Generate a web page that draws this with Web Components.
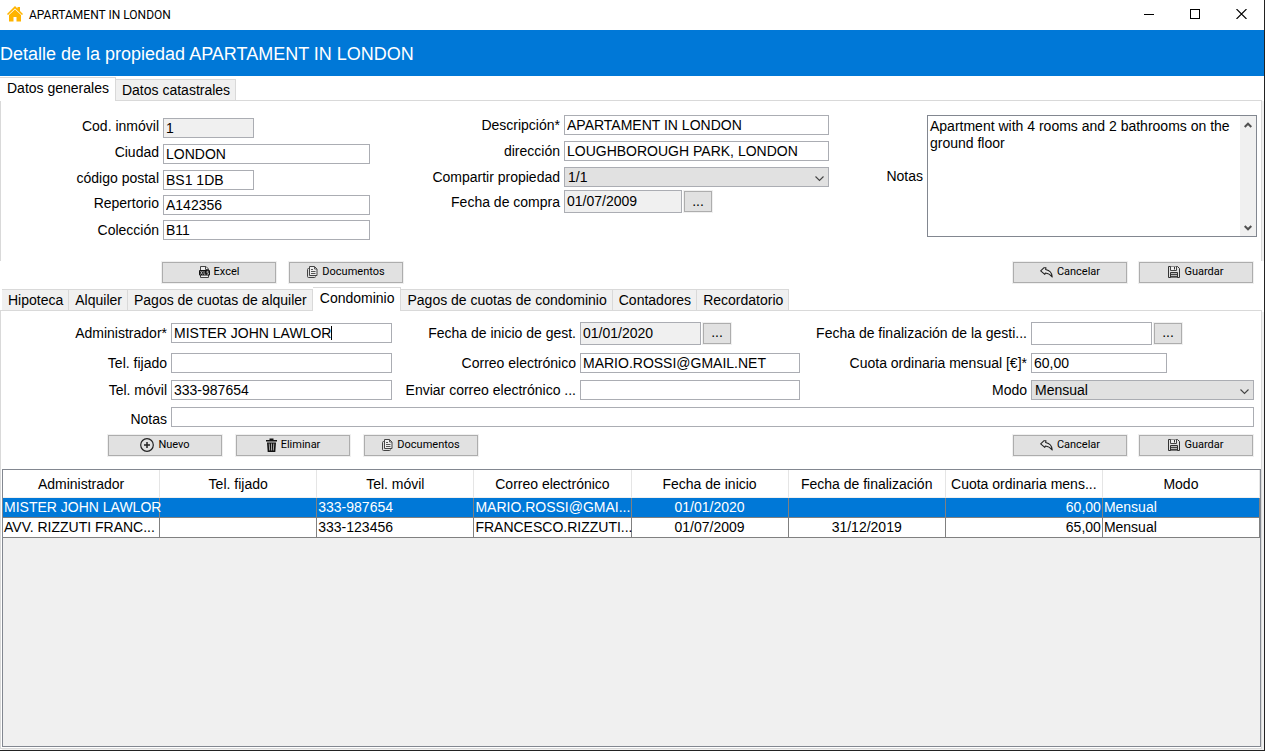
<!DOCTYPE html>
<html lang="es">
<head>
<meta charset="utf-8">
<title>APARTAMENT IN LONDON</title>
<style>
  html, body { margin: 0; height: 100%; }
  body { font: 14px/16px "Liberation Sans", Arial, sans-serif; color: #000; background: #fff; }
</style>
</head>
<body>
<property-detail></property-detail>

<script>
const ICONS = {
  home: '<svg width="16" height="16" viewBox="0 0 16 16"><path fill="#ffb400" d="M8 0 10.500 2.500V1H13V5L16 8 15 9 8 2.500 1 9 0 8Z"/><path fill="#ffb400" d="M2 9 8 3.600 14 9V15.500H9.500V11H6.500V15.500H2Z"/></svg>',
  excel: '<svg width="11" height="12" viewBox="0 0 11 12"><path fill="#eee" stroke="#444" d="M1.500 4V.5H7L9.500 3V4M1.500 9V11.500H9.500V9"/><path stroke="#444" fill="none" d="M6.500.5V3.500H9.500"/><rect y="4" width="11" height="5.500" rx="1" fill="#111"/><path stroke="#ccc" stroke-width=".8" fill="none" d="M1.500 5 3.500 8.500M3.500 5 1.500 8.500M5 5V8.200H6.500M9.500 5.300H8V6.800H9.500V8.200H7.800"/></svg>',
  docs: '<svg width="11" height="12" viewBox="0 0 11 12"><path fill="#ddd" stroke="#444" d="M2.500 2.500H1.500Q.5 2.500.5 3.500V10.500Q.5 11.500 1.500 11.500H7.500Q8.500 11.500 8.500 10.500"/><path fill="#eee" stroke="#444" d="M2.500.5H7.500L10 3V9.500H2.500Z"/><path stroke="#555" fill="none" d="M7.500.5V3H10M4 3.500H6M4 5.500H8.500M4 7.500H8.500"/></svg>',
  undo: '<svg width="13" height="11" viewBox="0 0 13 11"><path fill="#e6e6e6" stroke="#222" stroke-width="1.100" stroke-linejoin="round" d="M.7 3.800 3.800.8 6 .7 5.600 2.500C9 3.200 12 5.200 12.200 10 10 7.200 8 6.200 5.400 6L4.800 7.400Z"/></svg>',
  save: '<svg width="12" height="12" viewBox="0 0 12 12"><path fill="#e0e0e0" stroke="#333" d="M.5.5H9.500L11.500 2.500V11.500H.5Z"/><path fill="#eee" stroke="#444" d="M2.500.5V4.500H8.500V.5"/><path stroke="#333" d="M6.500 1V3.500"/><path fill="#bbb" stroke="#333" d="M2.500 11.500V6.500H9.500V11.500"/><path stroke="#444" d="M3 8.500H9M3 10.500H9"/></svg>',
  add: '<svg width="14" height="14" viewBox="0 0 14 14"><circle cx="7" cy="7" r="6.300" fill="none" stroke="#222" stroke-width="1.200"/><path stroke="#222" stroke-width="1.500" d="M7 4V10M4 7H10"/></svg>',
  trash: '<svg width="11" height="14" viewBox="0 0 11 14"><path fill="#111" d="M0 2H3.500V.5H7.500V2H11V3.500H0ZM1 4.500H10L9.300 14H1.700Z"/><path stroke="#ccc" stroke-width=".8" d="M3.200 5.500 3.700 12.500M5.500 5.500V12.500M7.800 5.500 7.300 12.500"/></svg>',
  min: '<svg width="10" height="10" viewBox="0 0 10 10"><path stroke="#000" d="M0 5.500H10"/></svg>',
  max: '<svg width="10" height="10" viewBox="0 0 10 10"><rect x=".5" y=".5" width="9" height="9" fill="none" stroke="#000"/></svg>',
  close: '<svg width="11" height="10" viewBox="0 0 11 10"><path stroke="#000" stroke-width="1.100" d="M.5 0 10.500 10M10.500 0 .5 10"/></svg>',
  up: '<svg width="8" height="6" viewBox="0 0 8 6"><path fill="none" stroke="#505050" stroke-width="2" d="M.7 5 4 1.700 7.300 5"/></svg>',
  down: '<svg width="8" height="6" viewBox="0 0 8 6"><path fill="none" stroke="#505050" stroke-width="2" d="M.7 1 4 4.300 7.300 1"/></svg>',
  chevron: '<svg width="9" height="6" viewBox="0 0 9 6"><path fill="none" stroke="#444" stroke-width="1.100" d="M.5.5 4.500 4.500 8.500.5"/></svg>'
};

class BaseElement extends HTMLElement {
  connectedCallback() {
    if (this.shadowRoot) return;
    const root = this.attachShadow({ mode: 'open' });
    root.innerHTML = `<style>*{box-sizing:border-box}${this.styles()}</style>${this.markup()}`;
  }
  attr(name, fallback = '') { return this.getAttribute(name) ?? fallback; }
}

/* Title bar with application icon and window buttons */
class TitleBar extends BaseElement {
  styles() { return `
    :host { display: flex; align-items: center; height: 30px; flex: none; background: #fff; font: 12px/16px Roboto, "Noto Sans", sans-serif; }
    .icon { display: flex; margin: 0 6px 3px 7px; }
    span.name { flex: 1; }
    button { width: 46px; height: 30px; padding: 0 0 2px; border: 0; background: none; display: flex; align-items: center; justify-content: center; }
  `; }
  markup() { return `
    <span class="icon">${ICONS.home}</span><span class="name"><slot></slot></span>
    <button aria-label="Minimizar">${ICONS.min}</button>
    <button aria-label="Maximizar">${ICONS.max}</button>
    <button aria-label="Cerrar">${ICONS.close}</button>`; }
}
customElements.define('title-bar', TitleBar);

/* Push button with an icon */
class ToolButton extends BaseElement {
  styles() { return `
    :host { display: block; }
    button { display: flex; align-items: center; justify-content: center; gap: 4px; width: 114px; height: 21px; padding: 0 0 1px;
      border: 1px solid #adadad; background: #e1e1e1; box-shadow: 0 0 0 1px #f0f0f0; color: #000;
      font: 11px/14px Roboto, "Noto Sans", sans-serif; }
  `; }
  markup() { return `<button>${ICONS[this.attr('icon')]}<span><slot></slot></span></button>`; }
}
customElements.define('tool-button', ToolButton);

/* Tab headings above a page */
class TabStrip extends BaseElement {
  styles() { return `
    :host { display: flex; align-items: flex-end; height: 24px; flex: none; border-bottom: 1px solid #d9d9d9; }
    button { font: inherit; color: #000; height: 21px; margin: 0; padding: 0 5px 0 6px; white-space: nowrap;
      border: 1px solid #d9d9d9; border-bottom: 0; border-left-width: 0; background: #f0f0f0; }
    button:first-child { border-left-width: 1px; }
    button[aria-selected=true] { position: relative; height: 24px; margin-bottom: -1px; padding: 0 6px 4px 7px; background: #fff; }
  `; }
  markup() {
    return this.attr('tabs').split('|').map(t =>
      `<button role="tab" aria-selected="${t === this.attr('active')}">${t}</button>`).join('');
  }
}
customElements.define('tab-strip', TabStrip);

/* Label and control on the label/control columns of the parent grid.
   kind: text (default), date, select, area */
class FormField extends BaseElement {
  styles() { return `
    :host { display: grid; grid-template-columns: subgrid; grid-column: span 2; align-items: center; }
    :host([wide]) { grid-column: 1 / -1; align-items: end; }
    :host([raised]) { align-items: start; }
    :host([first]) { min-height: 24px; }
    label { text-align: right; padding-right: 4px; white-space: nowrap; }
    .control { display: flex; align-items: center; gap: 2px; min-width: 0; position: relative; }
    :host([wide]) .control { grid-column: 2 / -1; }
    input, select { font: inherit; color: #000; width: 100%; height: 20px; margin: 0; padding: 0 2px; border: 1px solid #abadb3; border-radius: 0; background: #fff; outline: 0; }
    input[readonly] { background: #f0f0f0; }
    select { appearance: none; background: #e1e1e1; padding: 0 3px; }
    .control > svg { position: absolute; right: 5px; top: 9px; pointer-events: none; }
    :host([size=short]) input { width: 91px; }
    :host([size=money]) input { width: 136px; }
    :host([kind=date]) input { width: 121px; height: 23px; padding-bottom: 1px; }
    :host([kind=date][size=narrow]) input { width: 118px; }
    button { width: 28px; height: 21px; padding: 0 0 2px; border: 1px solid #adadad; background: #e1e1e1; box-shadow: 0 0 0 1px #f0f0f0; font: inherit; color: #000; }
    :host([caret]) input { background: linear-gradient(#000, #000) no-repeat 159px 2px / 1px 14px #fff; }
    .area { align-items: stretch; gap: 0; height: 122px; border: 1px solid #828790; }
    textarea { flex: 1; min-width: 0; font: inherit; line-height: 17px; color: #000; border: 0; margin: 0; padding: 2px; resize: none; outline: 0; overflow: hidden; background: #fff; }
    .bar { width: 16px; display: flex; flex-direction: column; justify-content: space-between; align-items: center; padding: 6px 0 5px; background: #f0f0f0; }
  `; }
  markup() {
    const kind = this.attr('kind', 'text'), value = this.attr('value');
    const ro = this.hasAttribute('readonly') ? ' readonly' : '';
    let control;
    if (kind === 'select') control = `<div class="control"><select id="c"><option>${value}</option></select>${ICONS.chevron}</div>`;
    else if (kind === 'area') control = `<div class="control area"><textarea id="c">${value}</textarea><div class="bar">${ICONS.up}${ICONS.down}</div></div>`;
    else control = `<div class="control"><input id="c" type="text" value="${value}"${ro}>${kind === 'date' ? '<button aria-label="Elegir fecha">...</button>' : ''}</div>`;
    return `<label for="c">${this.attr('label')}</label>${control}`;
  }
}
customElements.define('form-field', FormField);

/* Managers table */
class DataTable extends BaseElement {
  styles() { return `
    :host { display: block; border: 1px solid #828790; background: #f0f0f0; }
    table { width: 100%; table-layout: fixed; border-collapse: separate; border-spacing: 0; background: #fff; }
    th, td { white-space: nowrap; text-align: left; font-weight: normal; padding: 0 1px; }
    th { height: 28px; text-align: center; border-right: 1px solid #e5e5e5; border-bottom: 1px solid #f0f0f0; }
    td { height: 20px; padding-bottom: 2px; border-right: 1px solid #808080; border-bottom: 1px solid #808080; }
    tr.selected td { background: #0078d7; color: #fff; }
    td.center { text-align: center; }
    td.right { text-align: right; }
  `; }
  markup() {
    const heads = ['Administrador', 'Tel. fijado', 'Tel. móvil', 'Correo electrónico', 'Fecha de inicio', 'Fecha de finalización', 'Cuota ordinaria mens...', 'Modo'];
    const rows = [
      ['MISTER JOHN LAWLOR', '', '333-987654', 'MARIO.ROSSI@GMAI...', '01/01/2020', '', '60,00', 'Mensual'],
      ['AVV. RIZZUTI FRANC...', '', '333-123456', 'FRANCESCO.RIZZUTI...', '01/07/2009', '31/12/2019', '65,00', 'Mensual']
    ];
    const align = ['', '', '', '', 'center', 'center', 'right', ''];
    return `<table><thead><tr>${heads.map(h => `<th>${h}</th>`).join('')}</tr></thead><tbody>${
      rows.map((r, i) => `<tr class="${i ? '' : 'selected'}">${r.map((c, j) => `<td class="${align[j]}">${c}</td>`).join('')}</tr>`).join('')
    }</tbody></table>`;
  }
}
customElements.define('data-table', DataTable);

class PropertyDetail extends BaseElement {
  styles() { return `
    :host { display: flex; flex-direction: column; min-height: 100vh; border-right: 1px solid #222; border-bottom: 1px solid #222; background: #fff; box-sizing: border-box; }
    h1 { margin: 0; height: 46px; flex: none; background: #0078d7; color: #fff; font-size: 18px; line-height: 48px; font-weight: normal; }
    .strip1 { margin-top: 1px; margin-right: 2px; }
    .page { border-right: 1px solid #d9d9d9; margin-right: 2px; }
    .general { display: grid; grid-template-columns: 163px 207fr 194px 265fr 98px 330fr; padding: 14px 4px 21px 0; box-shadow: inset 1px 0 #d9d9d9, 2px 0 #f0f0f0; }
    section { display: grid; grid-template-columns: subgrid; grid-column: span 2; align-content: start; align-items: start; }
    .left { padding-top: 3px; grid-template-rows: 26px 26px 25px 25px 20px; }
    .middle { grid-template-rows: 26px 26px 23px 23px; }
    .actions { display: flex; justify-content: space-between; flex: none; padding: 1px 11px 4px 162px; }
    .actions div { display: flex; gap: 12px; }
    .actions .start { gap: 13px; }
    .strip2 { margin-right: 2px; padding-left: 2px; }
    .condo { flex: 1; display: flex; flex-direction: column; margin-bottom: 1px; padding: 10px 0 1px; border-bottom: 1px solid #d9d9d9; box-shadow: inset 1px 0 #d9d9d9, 2px 1px #f0f0f0; }
    .fields { display: grid; grid-template-columns: 171px 221fr 188px 220fr 231px 223fr; grid-template-rows: 32px 27px 27px 20px; align-items: start; padding-right: 7px; }
    .condo .actions { padding: 8px 8px 13px 108px; }
    .condo .start { gap: 14px; }
    data-table { flex: 1; margin-left: 2px; }
  `; }
  markup() { return `
    <title-bar>APARTAMENT IN LONDON</title-bar>
    <h1>Detalle de la propiedad APARTAMENT IN LONDON</h1>
    <tab-strip class="strip1" role="tablist" tabs="Datos generales|Datos catastrales" active="Datos generales"></tab-strip>
    <div class="page general">
      <section class="left">
        <form-field raised size="short" readonly label="Cod. inmóvil" value="1"></form-field>
        <form-field raised label="Ciudad" value="LONDON"></form-field>
        <form-field raised size="short" label="código postal" value="BS1 1DB"></form-field>
        <form-field raised label="Repertorio" value="A142356"></form-field>
        <form-field label="Colección" value="B11"></form-field>
      </section>
      <section class="middle">
        <form-field label="Descripción*" value="APARTAMENT IN LONDON"></form-field>
        <form-field label="dirección" value="LOUGHBOROUGH PARK, LONDON"></form-field>
        <form-field kind="select" label="Compartir propiedad" value="1/1"></form-field>
        <form-field kind="date" size="narrow" readonly label="Fecha de compra" value="01/07/2009"></form-field>
      </section>
      <section>
        <form-field kind="area" label="Notas" value="Apartment with 4 rooms and 2 bathrooms on the ground floor"></form-field>
      </section>
    </div>
    <div class="actions">
      <div class="start"><tool-button icon="excel">Excel</tool-button><tool-button icon="docs">Documentos</tool-button></div>
      <div><tool-button icon="undo">Cancelar</tool-button><tool-button icon="save">Guardar</tool-button></div>
    </div>
    <tab-strip class="strip2" role="tablist" tabs="Hipoteca|Alquiler|Pagos de cuotas de alquiler|Condominio|Pagos de cuotas de condominio|Contadores|Recordatorio" active="Condominio"></tab-strip>
    <div class="page condo">
      <div class="fields">
        <form-field first caret label="Administrador*" value="MISTER JOHN LAWLOR"></form-field>
        <form-field first kind="date" readonly label="Fecha de inicio de gest." value="01/01/2020"></form-field>
        <form-field first kind="date" label="Fecha de finalización de la gesti..."></form-field>
        <form-field label="Tel. fijado"></form-field>
        <form-field label="Correo electrónico" value="MARIO.ROSSI@GMAIL.NET"></form-field>
        <form-field size="money" label="Cuota ordinaria mensual [€]*" value="60,00"></form-field>
        <form-field label="Tel. móvil" value="333-987654"></form-field>
        <form-field label="Enviar correo electrónico ..."></form-field>
        <form-field kind="select" label="Modo" value="Mensual"></form-field>
        <form-field wide label="Notas"></form-field>
      </div>
      <div class="actions">
        <div class="start"><tool-button icon="add">Nuevo</tool-button><tool-button icon="trash">Eliminar</tool-button><tool-button icon="docs">Documentos</tool-button></div>
        <div><tool-button icon="undo">Cancelar</tool-button><tool-button icon="save">Guardar</tool-button></div>
      </div>
      <data-table></data-table>
    </div>`; }
}
customElements.define('property-detail', PropertyDetail);
</script>
</body>
</html>
